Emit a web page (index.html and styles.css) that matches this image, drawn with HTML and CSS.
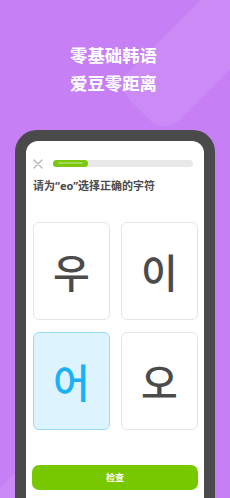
FILE: index.html
```html
<!DOCTYPE html>
<html lang="zh">
<head>
<meta charset="utf-8">
<link rel="stylesheet" href="styles.css">
</head>
<body>
<div class="screen">
  <div class="headline">
    <div>零基础韩语</div>
    <div>爱豆零距离</div>
  </div>
  <div class="phone">
    <div class="phone-inner">
      <div class="top-row">
        <svg class="close" width="10" height="10" viewBox="0 0 10 10"><path d="M1 1L9 9M9 1L1 9" stroke="#b5b5b5" stroke-width="1.3" stroke-linecap="round"/></svg>
        <div class="progress"><div class="progress-fill"><span class="shine"></span></div></div>
      </div>
      <div class="title">请为“eo”选择正确的字符</div>
      <div class="grid">
        <div class="card">우</div>
        <div class="card">이</div>
        <div class="card selected">어</div>
        <div class="card">오</div>
      </div>
      <div class="button">检查</div>
    </div>
  </div>
</div>
</body>
</html>
```
FILE: styles.css
```css
html, body {
  margin: 0;
  padding: 0;
}
body {
  width: 230px;
  height: 498px;
  overflow: hidden;
  font-family: "Noto Sans", "Noto Sans CJK SC", sans-serif;
}
.screen {
  position: relative;
  width: 230px;
  height: 498px;
  overflow: hidden;
  background: #c67ff5;
}
.screen::before {
  content: "";
  position: absolute;
  left: 246px;
  top: -231px;
  width: 70px;
  height: 400px;
  border-radius: 22px;
  background: rgba(255, 255, 255, 0.09);
  transform: rotate(45deg);
}
.screen::after {
  content: "";
  position: absolute;
  left: -40px;
  top: 440px;
  width: 60px;
  height: 200px;
  border-radius: 30px;
  background: rgba(255, 255, 255, 0.08);
  transform: rotate(45deg);
}
.headline {
  position: relative;
  padding-top: 41px;
  text-align: center;
  color: #fff;
  font-family: "Noto Sans CJK SC", sans-serif;
  font-weight: 700;
  font-size: 17.4px;
  line-height: 28px;
  padding-right: 3px;
}
.phone {
  position: relative;
  z-index: 1;
  margin: 33px 0 0 15px;
  width: 178px;
  height: 400px;
  border: 11px solid #4a4a4a;
  border-radius: 22px;
  background: #4a4a4a;
}
.phone-inner {
  background: #fff;
  height: 100%;
  border-radius: 12px 12px 0 0;
  padding: 18px 6px 0 7px;
  box-sizing: border-box;
}
.top-row {
  display: flex;
  align-items: center;
  gap: 10px;
  height: 9px;
}
.close {
  display: block;
  flex: none;
  margin-top: 1px;
}
.progress {
  flex: 1;
  height: 7px;
  border-radius: 4px;
  background: #e8e8e8;
  margin-right: 5px;
}
.progress-fill {
  position: relative;
  width: 25%;
  height: 100%;
  border-radius: 4px;
  background: #7ac70c;
}
.shine {
  position: absolute;
  left: 5px;
  right: 5px;
  top: 2px;
  height: 2px;
  border-radius: 1px;
  background: rgba(255, 255, 255, 0.3);
}
.title {
  margin-top: 11px;
  font-size: 11px;
  line-height: 14px;
  font-weight: 700;
  color: #4b4b4b;
  white-space: nowrap;
}
.grid {
  margin-top: 29px;
  display: grid;
  grid-template-columns: 77px 77px;
  grid-auto-rows: 98px;
  column-gap: 11px;
  row-gap: 12px;
}
.card {
  box-sizing: border-box;
  border: 1px solid #e5e5e5;
  border-radius: 6px;
  display: flex;
  align-items: center;
  justify-content: center;
  font-family: "Noto Sans CJK KR", sans-serif;
  font-size: 40px;
  font-weight: 500;
  color: #4b4b4b;
  background: #fff;
}
.card.selected {
  background: #ddf4ff;
  border-color: #9bd9f7;
  color: #1cb0f6;
}
.button {
  margin-top: 35px;
  height: 25px;
  width: 166px;
  margin-left: -1px;
  border-radius: 7px;
  background: #78c800;
  color: #fff;
  font-family: "Noto Sans CJK SC", sans-serif;
  font-weight: 700;
  font-size: 9px;
  display: flex;
  align-items: center;
  justify-content: center;
}
```
